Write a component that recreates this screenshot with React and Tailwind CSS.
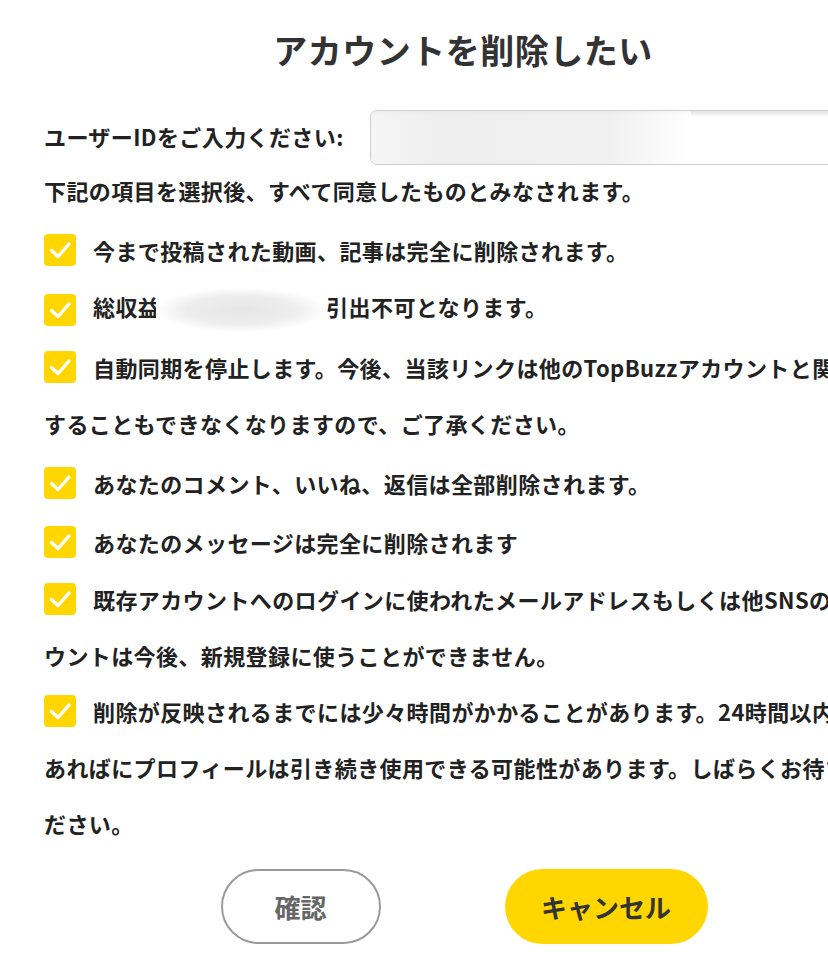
import React from "react";

function Check() {
  return (
    <span className="flex h-8 w-8 shrink-0 items-center justify-center rounded-[4px] bg-[#FFD600]">
      <svg width="24" height="20" viewBox="0 0 24 20" fill="none">
        <path d="M3.5 10.5 L10 16.5 L21 4" stroke="#ffffff" strokeWidth="3.4" strokeLinecap="round" strokeLinejoin="round" />
      </svg>
    </span>
  );
}

function Item({ mt, children }) {
  return (
    <div className={`flex h-14 items-center gap-[17px] whitespace-nowrap ${mt}`}>
      <Check />
      <span>{children}</span>
    </div>
  );
}

function Line({ children }) {
  return <div className="flex h-14 items-center whitespace-nowrap">{children}</div>;
}

export default function App() {
  return (
    <div
      className="h-[976px] w-[828px] overflow-hidden bg-white text-[#222] antialiased"
      style={{ fontFamily: '"Noto Sans CJK JP", "Noto Sans", sans-serif' }}
    >
      <div className="w-[882px] pl-[44px]">
        <h1 className="mt-[22px] h-14 text-center text-[34px] font-bold leading-[56px] tracking-[0.5px] text-[#333]">
          アカウントを削除したい
        </h1>

        <div className="mt-[32px] flex h-[55px] items-center text-[22px] font-semibold tracking-[0.4px]">
          <span className="-mt-[3px] w-[326px] shrink-0 whitespace-nowrap">ユーザーIDをご入力ください:</span>
          <div className="relative h-[55px] w-[520px] shrink-0 overflow-hidden rounded-[7px] border border-[#cfcfcf] bg-white shadow-[inset_0_3px_4px_rgba(0,0,0,0.12)]">
            <div className="h-full w-[320px] bg-[linear-gradient(90deg,#f3f3f3_0%,#ebebeb_20%,#ededed_75%,#ffffff_100%)] opacity-80" />
          </div>
        </div>

        <div className="-mt-[3px] text-[22px] font-semibold tracking-[0.4px]">
          <Line>下記の項目を選択後、すべて同意したものとみなされます。</Line>
          <Item mt="mt-1">今まで投稿された動画、記事は完全に削除されます。</Item>
          <Item mt="mt-1">
            総収益
            <span className="inline-block h-[44px] w-[170px] -ml-[4px] align-middle bg-[radial-gradient(ellipse_at_center,#e6e6e6_0%,#ededed_45%,#ffffff_72%)]" />
            引出不可となります。
          </Item>
          <Item mt="mt-px">自動同期を停止します。今後、当該リンクは他のTopBuzzアカウントと関連付け</Item>
          <Line>することもできなくなりますので、ご了承ください。</Line>
          <Item mt="mt-1">あなたのコメント、いいね、返信は全部削除されます。</Item>
          <Item mt="mt-[3px]">あなたのメッセージは完全に削除されます</Item>
          <Item mt="mt-px">既存アカウントへのログインに使われたメールアドレスもしくは他SNSのアカ</Item>
          <Line>ウントは今後、新規登録に使うことができません。</Line>
          <Item mt="mt-0">削除が反映されるまでには少々時間がかかることがあります。24時間以内で</Item>
          <Line>あればにプロフィールは引き続き使用できる可能性があります。しばらくお待ちく</Line>
          <Line>ださい。</Line>
        </div>

        <div className="mt-[18px] flex justify-center gap-[124px] pl-[2px]">
          <button className="flex h-[75px] w-[160px] items-center justify-center rounded-full border-2 border-[#9a9a9a] bg-white text-[26px] font-bold text-[#666]">
            確認
          </button>
          <button className="flex h-[75px] w-[203px] items-center justify-center rounded-full bg-[#FFD600] text-[26px] font-bold text-[#333]">
            キャンセル
          </button>
        </div>
      </div>
    </div>
  );
}
